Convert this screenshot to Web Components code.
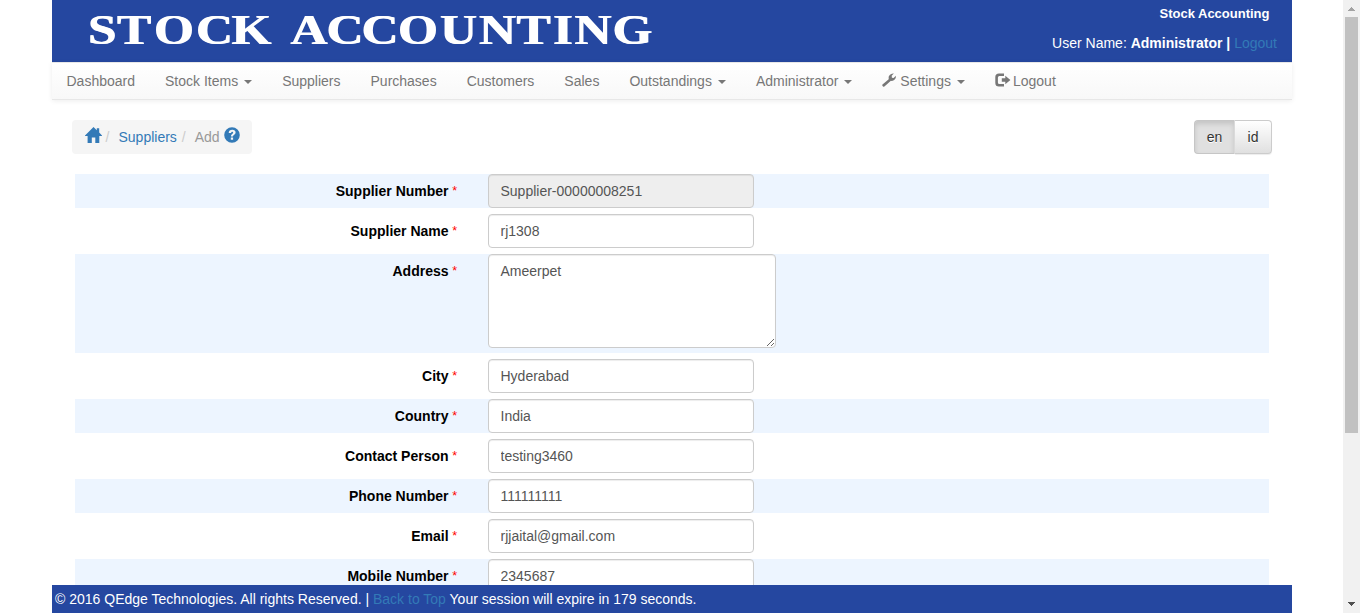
<!DOCTYPE html>
<html lang="en">
<head>
<meta charset="utf-8">
<title>Stock Accounting</title>
<style>
html,body{margin:0;height:100%;overflow:hidden;background:#fff}
body{font:14px/20px "Liberation Sans",Arial,sans-serif;color:#000}
</style>
</head>
<body>
<app-shell></app-shell>
<script>
const define = (name, css, html) => customElements.define(name, class extends HTMLElement {
  connectedCallback() {
    if (this.shadowRoot) return;
    const root = this.attachShadow({mode: 'open'});
    root.innerHTML = `<style>*{box-sizing:border-box}a{color:#337ab7;text-decoration:none}${css}</style>` +
      (typeof html === 'function' ? html(this) : html);
  }
});

const icons = {
  wrench: [15, 14, '<path d="M1 13.4 .3 12.6Q0 12.1.5 11.6L6.7 6.3Q6.1 3.6 7.7 2 9.3.2 11.8.5L9.7 2.8 9.9 4.7 11.6 5 13.9 2.8Q14.2 5 12.7 6.5 11.2 8.2 8.9 7.8L2.4 13.6Q1.6 14 1 13.4Z"/>'],
  logout: [16, 14, '<path d="M9 .5H4Q.3.5.3 4V9.9Q.3 13.4 4 13.4H9V10.9H4.4Q2.9 10.9 2.9 9.4V4.5Q2.9 3 4.4 3H9Z"/><path d="M6.8 5.3H10.3V2.8L15.4 7 10.3 11.2V8.7H6.8Z"/>'],
  home: [17, 16, '<path d="M8.5 0 11.8 3.2V1.2H14.2V5.6L17 8.4V9H14.3V16H10.3V10.4H6.8V16H2.6V9H0V8.4Z"/>'],
  help: [16, 16, '<path fill-rule="evenodd" d="M8 .2A7.8 7.8 0 1 1 8 15.8 7.8 7.8 0 0 1 8 .2ZM4.7 6H7.1Q7.1 4.7 8.2 4.7 9.2 4.7 9.2 5.6 9.2 6.2 8.2 6.9 6.9 7.7 6.9 9.4H9Q9 8.6 10.2 7.8 11.6 6.9 11.6 5.4 11.4 2.9 8.3 2.8 4.9 2.9 4.7 6ZM6.8 10.5V12.8H9.1V10.5Z"/>']
};
define('glyph-icon', ':host{display:inline-block}svg{display:block;fill:currentColor}', el => {
  const [w, h, body] = icons[el.getAttribute('name')];
  return `<svg width="${w}" height="${h}" viewBox="0 0 ${w} ${h}">${body}</svg>`;
});

const glyphX = [87, 116, 153, 195, 230.5, 270, 289.5, 325.5, 360.5, 397, 439, 478, 515.5, 552, 573.5, 611.5];
define('brand-title', ':host{display:block}svg{display:block;filter:drop-shadow(1.2px 0 0 #fff)}text{font:bold 42.5px "Liberation Serif",serif;fill:#fff;white-space:pre}',
  `<svg width="620" height="62"><text transform="translate(-51.5 0) scale(1.21 1)" y="43.7" x="${glyphX.map(x => (x / 1.21).toFixed(2)).join(' ')}">STOCK ACCOUNTING</text></svg>`);

define('page-header', `:host{display:flex;justify-content:space-between;flex:none;height:62px;background:#2547a0;color:#fff}
.user{text-align:right;padding:4px 15px 0 0;white-space:nowrap}.product{display:block;font-size:13px;padding-right:7.5px;margin-bottom:9px}`,
`<brand-title></brand-title><div class="user"><b class="product">Stock Accounting</b><div>User Name: <b>Administrator</b> <b>|</b> <a>Logout</a></div></div>`);

define('nav-item', `:host{display:flex;align-items:center;padding:0 15px;color:#777}
glyph-icon{margin-right:2px;margin-top:-2px}glyph-icon[name=wrench]{margin-right:3px}
.caret{margin:1px 0 0 6px;border:4px solid transparent;border-top-color:currentColor;border-bottom:0}`,
el => `${el.hasAttribute('icon') ? `<glyph-icon name="${el.getAttribute('icon')}"></glyph-icon>` : ''}<slot></slot>${el.hasAttribute('menu') ? '<i class="caret"></i>' : ''}`);

define('nav-bar', `:host{box-sizing:border-box;display:flex;flex:none;height:38px;border:solid #e7e7e7;border-width:1px 0;background:linear-gradient(#fff,#f8f8f8);box-shadow:0 1px 5px rgba(0,0,0,.075)}
nav-item:first-of-type{padding-left:14.5px}`,
`<nav-item>Dashboard</nav-item><nav-item menu>Stock Items</nav-item><nav-item>Suppliers</nav-item><nav-item>Purchases</nav-item><nav-item>Customers</nav-item><nav-item>Sales</nav-item><nav-item menu>Outstandings</nav-item><nav-item menu>Administrator</nav-item><nav-item menu icon="wrench">Settings</nav-item><nav-item icon="logout">Logout</nav-item>`);

define('bread-crumb', `:host{box-sizing:border-box;display:flex;align-items:center;width:180px;height:34px;padding:0 0 0 12.6px;background:#f5f5f5;border-radius:4px;color:#999}
glyph-icon{color:#337ab7;margin-top:-4px}.sep{color:#ccc}.one{margin:0 9px 0 4px}.two{margin:0 9px 0 5px}.help{margin-left:4px}`,
`<glyph-icon class="home" name="home"></glyph-icon><span class="sep one">/</span><a>Suppliers</a><span class="sep two">/</span><span>Add</span><glyph-icon class="help" name="help"></glyph-icon>`);

define('lang-switch', `:host{display:flex;color:#333;text-shadow:0 1px 0 #fff}
span{height:34px;display:grid;place-items:center;border:1px solid #ccc}
.on{width:41px;border-radius:4px 0 0 4px;background:#e0e0e0;border-color:#c6c6c6 #dbdbdb #c6c6c6 #c6c6c6;box-shadow:inset 0 3px 5px rgba(0,0,0,.125)}
.off{width:37px;border-left:0;border-radius:0 4px 4px 0;background:linear-gradient(#fff,#e0e0e0);box-shadow:0 1px 1px rgba(0,0,0,.075),inset 0 1px 0 rgba(255,255,255,.15)}`,
`<span class="on">en</span><span class="off">id</span>`);

define('form-row', `:host{display:grid;grid-template-columns:382px 1fr;column-gap:31px;min-height:34px}
:host([shaded]){background:#edf5ff}
.label{text-align:right;font-weight:bold;padding-top:7px;white-space:nowrap}
sup{color:red;font:12.5px/14px "Liberation Sans",sans-serif;vertical-align:1px;margin-left:-.3px}
input,textarea{display:block;margin:0;width:266px;height:34px;padding:6px 11.5px;font:14px/20px "Liberation Sans",Arial,sans-serif;color:#555;background:#fff;border:1px solid #ccc;border-radius:4px;box-shadow:inset 0 1px 1px rgba(0,0,0,.075);outline:0}
input[readonly]{background:#eee}
textarea{width:288px;height:94px;margin-bottom:5px;overflow:hidden;resize:both}`,
el => {
  const v = el.getAttribute('value');
  return `<div class="label"><slot></slot> <sup>*</sup></div>` + (el.hasAttribute('area')
    ? `<textarea>${v}</textarea>` : `<input value="${v}"${el.hasAttribute('readonly') ? ' readonly' : ''}>`);
});

define('supplier-form', ':host{display:grid;row-gap:6px;margin:20px 23px 0;flex:none}',
`<form-row shaded readonly value="Supplier-00000008251">Supplier Number</form-row>
<form-row value="rj1308">Supplier Name</form-row>
<form-row shaded area value="Ameerpet">Address</form-row>
<form-row value="Hyderabad">City</form-row>
<form-row shaded value="India">Country</form-row>
<form-row value="testing3460">Contact Person</form-row>
<form-row shaded value="111111111">Phone Number</form-row>
<form-row value="rjjaital@gmail.com">Email</form-row>
<form-row shaded value="2345687">Mobile Number</form-row>`);

define('page-footer', ':host{box-sizing:border-box;display:block;flex:none;height:28px;padding:4px 3px;background:#2547a0;color:#fff;white-space:nowrap}',
`© 2016 QEdge Technologies. All rights Reserved. | <a>Back to Top</a> Your session will expire in 179 seconds.`);

define('scroll-rail', `:host{display:flex;flex-direction:column;align-items:center;width:17px;height:613px;background:#f1f1f1}
svg{flex:none}.thumb{width:13px;height:416px;background:#c1c1c1;margin-bottom:auto}`,
`<svg width="17" height="17" shape-rendering="crispEdges"><path d="M5 11V10H6V9H7V8H8V7H9V8H10V9H11V10H12V11Z" fill="#a3a3a3"/></svg><div class="thumb"></div><svg width="17" height="17" shape-rendering="crispEdges"><path d="M5 6H12V7H11V8H10V9H9V10H8V9H7V8H6V7H5Z" fill="#505050"/></svg>`);

define('app-shell', `:host{display:grid;grid-template-columns:1240px 17px;justify-content:space-between;padding-left:52px;height:613px;overflow:hidden}
.page{display:flex;flex-direction:column;height:613px}
main{flex:1;min-height:0;overflow:hidden;margin-top:6px}
.tools{display:flex;justify-content:space-between;margin:14px 20px 0}`,
`<div class="page"><page-header></page-header><nav-bar></nav-bar><main><div class="tools"><bread-crumb></bread-crumb><lang-switch></lang-switch></div><supplier-form></supplier-form></main><page-footer></page-footer></div><scroll-rail></scroll-rail>`);
</script>
</body>
</html>
